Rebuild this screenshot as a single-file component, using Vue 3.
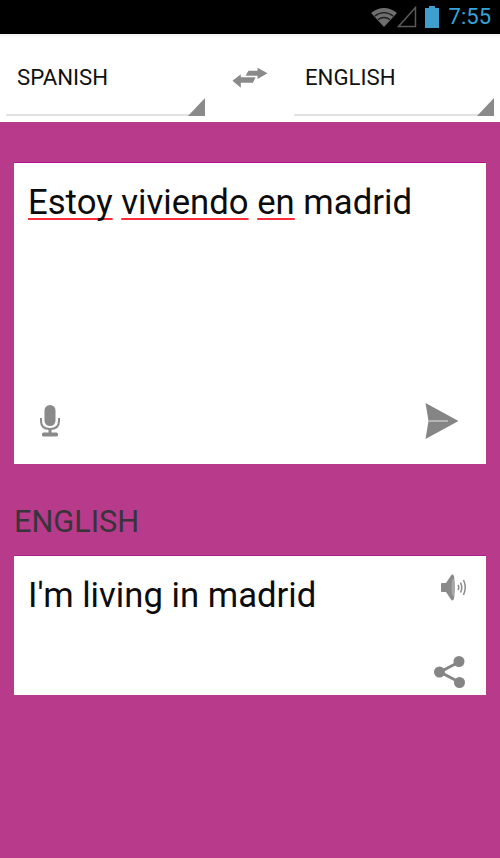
<template>
  <div class="screen">
    <div class="status-bar">
      <svg class="wifi" width="28" height="22" viewBox="0 0 28 22">
        <path d="M1 7 Q14 -3 27 7 L14 21 Z" fill="#6e6e6e" />
        <path d="M4.6 10.2 Q14 3 23.4 10.2 M8 13.6 Q14 9.4 20 13.6" stroke="#000" stroke-width="1.3" fill="none" opacity="0.75" />
      </svg>
      <svg class="signal" width="20" height="22" viewBox="0 0 20 22">
        <path d="M18.5 1.5 V20.5 H1.5 Z" fill="none" stroke="#5a5a5a" stroke-width="1.5" />
      </svg>
      <svg class="battery" width="16" height="22" viewBox="0 0 16 22">
        <path d="M5 0 H11 V2 H15 V22 H1 V2 H5 Z" fill="#3f9fcc" />
      </svg>
      <span class="clock">7:55</span>
    </div>

    <div class="lang-bar">
      <div class="spinner"><span>SPANISH</span></div>
      <svg class="swap" width="36" height="22" viewBox="0 0 36 22">
        <path d="M35.5 6.3 L25.5 0.7 V3.7 H16.5 L13.5 8.7 H25.5 V12 Z" fill="#8a8a8a" />
        <path d="M0.5 13.7 L8.8 7.3 V10.3 H23.5 L21 15.7 H8.8 V20.7 Z" fill="#8a8a8a" />
      </svg>
      <div class="spinner"><span>ENGLISH</span></div>
    </div>

    <main class="content">
      <section class="card source">
        <p class="text">
          <span class="misspelt">Estoy</span> <span class="misspelt">viviendo</span> <span class="misspelt">en</span> madrid
        </p>
        <div class="card-actions">
          <svg width="22" height="32" viewBox="0 0 22 32">
            <rect x="5.5" y="0" width="11" height="21" rx="5.5" fill="#8a8a8a" />
            <path d="M2 13 V16 Q2 24 11 24 Q20 24 20 16 V13" fill="none" stroke="#8a8a8a" stroke-width="2" />
            <rect x="9.5" y="24" width="3" height="4" fill="#8a8a8a" />
            <rect x="3" y="27.5" width="16" height="4" rx="1.5" fill="#8a8a8a" />
          </svg>
          <svg width="34" height="36" viewBox="0 0 34 36">
            <path d="M0.5 0 L33.5 18 L0.5 36 L3.5 18 Z" fill="#858585" />
            <path d="M3.5 18 H23" stroke="#e4e4e4" stroke-width="1" />
          </svg>
        </div>
      </section>

      <h2 class="target-label">ENGLISH</h2>

      <section class="card target">
        <p class="text">I'm living in madrid</p>
        <div class="target-icons">
          <svg width="27" height="27" viewBox="0 0 27 27">
            <path d="M1 10 Q1 9 2 9 H6 L11 1.5 Q12.5 -0.5 14 2 Q15.5 13.5 14 25 Q12.5 27.5 11 25.5 L6 18 H2 Q1 18 1 17 Z" fill="#8a8a8a" />
            <ellipse cx="13" cy="13.5" rx="1.5" ry="9" fill="#a8a8a8" />
            <path d="M18 11 Q19.5 13.5 18 16 M20.5 8.5 Q23 13.5 20.5 18.5 M23.5 6 Q27 13.5 23.5 21" fill="none" stroke="#8a8a8a" stroke-width="1.5" />
          </svg>
          <svg width="34" height="34" viewBox="0 0 34 34">
            <path d="M26 7 L7 17 L26 27" fill="none" stroke="#858585" stroke-width="3" />
            <circle cx="26" cy="6.5" r="5.5" fill="#858585" />
            <circle cx="6.5" cy="17" r="5.5" fill="#858585" />
            <circle cx="26.5" cy="27.5" r="5.5" fill="#858585" />
          </svg>
        </div>
      </section>
    </main>
  </div>
</template>

<script setup>
</script>

<style>
html,
body {
  margin: 0;
}
</style>

<style scoped>
.screen {
  width: 500px;
  height: 858px;
  display: flex;
  flex-direction: column;
  overflow: hidden;
  font-family: Roboto, "Liberation Sans", sans-serif;
}

.status-bar {
  height: 34px;
  background: #000;
  display: flex;
  align-items: center;
  justify-content: flex-end;
  padding-right: 9px;
  box-sizing: border-box;
}

.wifi {
  margin-right: -1px;
}

.signal {
  margin-right: 7px;
}

.battery {
  margin-right: 9px;
}

.clock {
  color: #35a4d8;
  font-size: 22px;
  line-height: 34px;
}

.lang-bar {
  height: 88px;
  background: linear-gradient(#f1f1f1, #fff 4px);
  box-sizing: border-box;
  padding: 0 6px;
  display: grid;
  grid-template-columns: 199px 89px 200px;
  align-items: start;
}

.spinner {
  height: 82px;
  box-sizing: border-box;
  border-bottom: 2px solid #e2e2e2;
  padding: 31px 0 0 11px;
  position: relative;
  font-size: 22.2px;
  line-height: 25px;
  color: #111;
}

.spinner::after {
  content: "";
  position: absolute;
  right: 0;
  bottom: -2px;
  width: 0;
  height: 0;
  border-style: solid;
  border-width: 0 0 18px 17px;
  border-color: transparent transparent #8a8a8a transparent;
}

.swap {
  justify-self: center;
  margin-top: 33px;
}

.content {
  flex: 1;
  background: #b83a8b;
  padding: 40px 14.5px 0 14px;
}

.card {
  background: #fff;
  box-sizing: border-box;
  border-top: 1px solid #b8108c;
  position: relative;
}

.source {
  height: 302px;
  display: flex;
  flex-direction: column;
  justify-content: space-between;
  padding: 18px 14px 0;
}

.text {
  margin: 0;
  font-size: 34.7px;
  line-height: 42px;
  color: #0c0c0c;
}

.misspelt {
  text-decoration: underline 2px #ff2d3a;
  text-underline-offset: 4px;
  text-decoration-skip-ink: none;
}

.card-actions {
  display: flex;
  justify-content: space-between;
  align-items: center;
  padding: 0 12.5px 25px 11px;
}

.target-label {
  margin: 40px 0 16px;
  font-size: 30.7px;
  line-height: 35px;
  font-weight: 400;
  color: #38343a;
}

.target {
  height: 140px;
  padding: 18px 14px 0;
  border-top-color: #b0208a;
}

.target-icons {
  position: absolute;
  right: 18.5px;
  top: 18px;
  bottom: 6px;
  display: flex;
  flex-direction: column;
  justify-content: space-between;
  align-items: flex-end;
}
</style>
